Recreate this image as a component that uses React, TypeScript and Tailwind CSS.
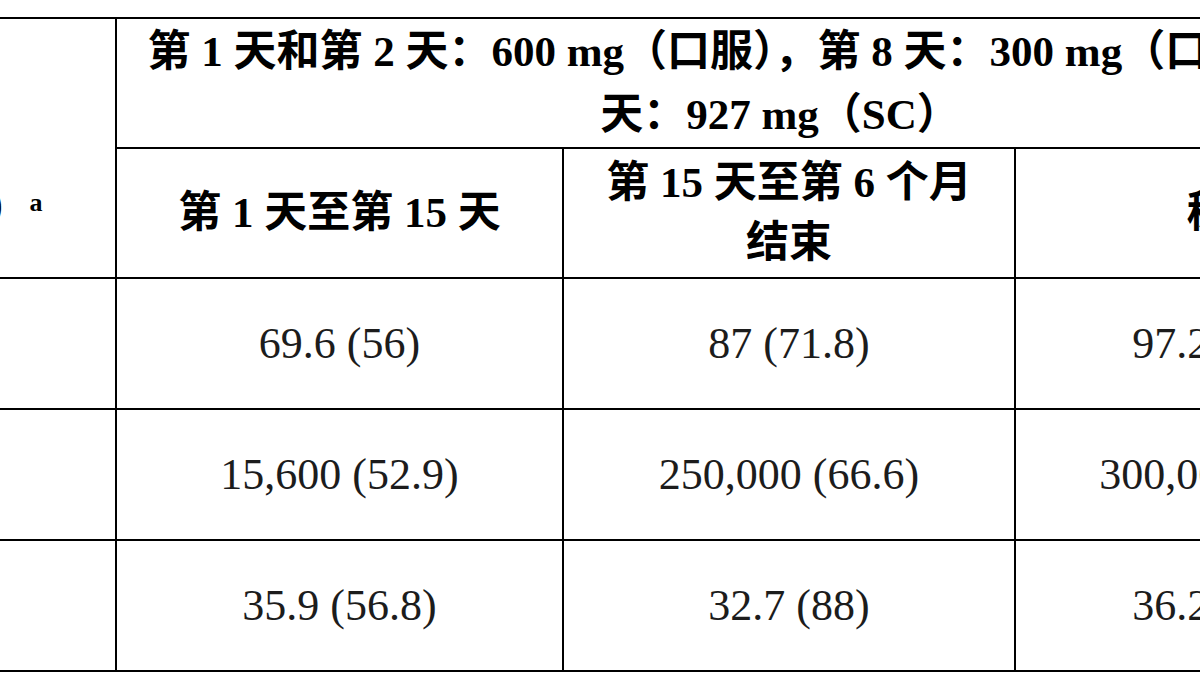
const serif = "font-['Liberation_Serif','Noto_Sans_CJK_SC',serif]";

const rows = [
  { label: "Cmax", values: ["69.6 (56)", "87 (71.8)", "97.2 (58.9)"] },
  { label: "AUC", values: ["15,600 (52.9)", "250,000 (66.6)", "300,000 (60.5)"] },
  { label: "Cmin", values: ["35.9 (56.8)", "32.7 (88)", "36.2 (73.4)"] },
];

export default function App() {
  return (
    <div className={`w-[1200px] h-[675px] overflow-hidden bg-white pt-[17px] ${serif}`}>
      <table className="-ml-[217px] w-[1660px] min-w-[1660px] border-collapse table-fixed text-[43px] text-black">
        <colgroup>
          <col className="w-[332px]" />
          <col className="w-[447px]" />
          <col className="w-[452px]" />
          <col className="w-[429px]" />
        </colgroup>
        <thead>
          <tr className="h-[130px]">
            <th rowSpan={2} className="border-2 border-black font-bold leading-[62px] align-middle">
              PK
              <br />
              参数
              <br />
              （单位）<sup className="text-[26px] font-bold">a</sup>
            </th>
            <th colSpan={3} className="border-2 border-black font-bold leading-[63px] align-middle">
              第 1 天和第 2 天：600 mg（口服），第 8 天：300 mg（口服），第 15
              <br />
              天：927 mg（SC）
            </th>
          </tr>
          <tr className="h-[130px]">
            <th className="border-2 border-black font-bold leading-[60px]">第 1 天至第 15 天</th>
            <th className="border-2 border-black font-bold leading-[60px]">
              第 15 天至第 6 个月
              <br />
              结束
            </th>
            <th className="border-2 border-black font-bold leading-[60px]">稳态</th>
          </tr>
        </thead>
        <tbody className="text-[44px]">
          {rows.map((r) => (
            <tr key={r.label} className="h-[131px]">
              <td className="border-2 border-black pl-4 text-left">{r.label}</td>
              {r.values.map((v) => (
                <td key={v} className="border-2 border-black text-center text-[#1c1c1c]">
                  {v}
                </td>
              ))}
            </tr>
          ))}
        </tbody>
      </table>
    </div>
  );
}
